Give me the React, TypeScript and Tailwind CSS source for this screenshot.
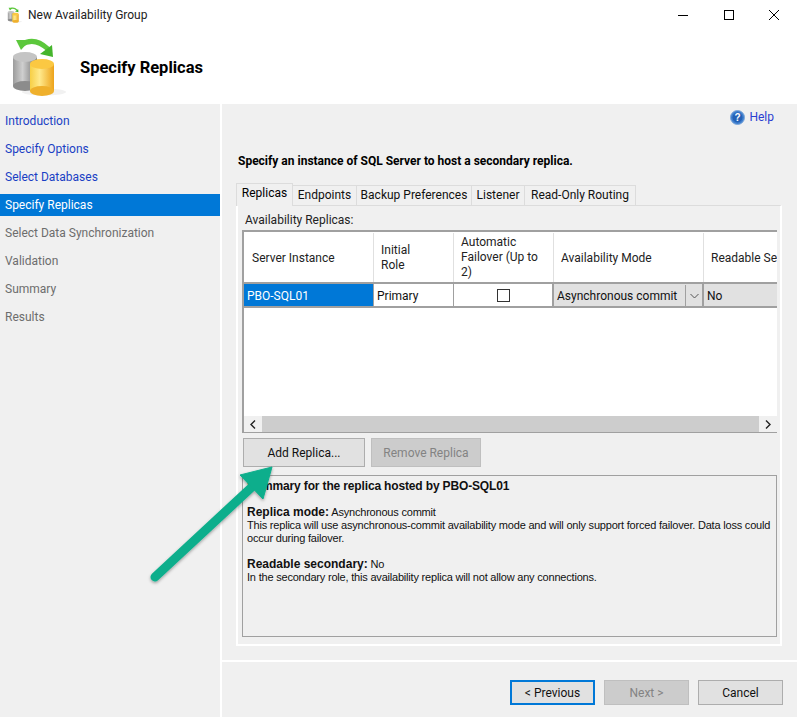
const ui = { fontFamily: 'Roboto, "Noto Sans", sans-serif' };

function DbIcon({ size }: { size: number }) {
  return (
    <svg width={size} height={size} viewBox="0 0 60 60" className="block">
      <defs>
        <linearGradient id="g1" x1="0" x2="1" y1="0" y2="0">
          <stop offset="0" stopColor="#9c9c9c" />
          <stop offset="0.4" stopColor="#cfcfcf" />
          <stop offset="1" stopColor="#6f6f6f" />
        </linearGradient>
        <linearGradient id="g2" x1="0" x2="1" y1="0" y2="0">
          <stop offset="0" stopColor="#f7cf45" />
          <stop offset="0.4" stopColor="#ffe98c" />
          <stop offset="1" stopColor="#eda31a" />
        </linearGradient>
      </defs>
      <ellipse cx="34" cy="55" rx="22" ry="3.5" fill="#f1f1f1" />
      <path d="M11 8 Q24 -1 38 12" fill="none" stroke="#5cc83c" strokeWidth="5" />
      <path d="M6 3 L20 3 L11 13 Z" fill="#5cc83c" />
      <path d="M30 17 L42 8 L43 20 Z" fill="#45b52c" />
      <rect x="3" y="20" width="24" height="29" fill="url(#g1)" />
      <ellipse cx="15" cy="49" rx="12" ry="5" fill="#8c8c8c" />
      <ellipse cx="15" cy="20" rx="12" ry="5" fill="#c4c4c4" />
      <rect x="20" y="27" width="24" height="27" fill="url(#g2)" />
      <ellipse cx="32" cy="54" rx="12" ry="5" fill="#efb02c" />
      <ellipse cx="32" cy="27" rx="12" ry="5" fill="#fbc842" />
    </svg>
  );
}

function HelpIcon() {
  return (
    <svg width="15" height="15" viewBox="0 0 15 15" className="block">
      <circle cx="7.5" cy="7.5" r="7" fill="#3f7fcf" stroke="#7da7d9" />
      <circle cx="7.5" cy="7.5" r="5" fill="#2461b5" />
      <text x="7.5" y="11" textAnchor="middle" fontSize="10" fontWeight="700" fill="#fff" fontFamily="Liberation Sans">?</text>
    </svg>
  );
}

const navItems: [string, boolean, boolean][] = [
  ["Introduction", true, false],
  ["Specify Options", true, false],
  ["Select Databases", true, false],
  ["Specify Replicas", false, true],
  ["Select Data Synchronization", false, false],
  ["Validation", false, false],
  ["Summary", false, false],
  ["Results", false, false],
];

function Tab({ label, w, active }: { label: string; w: string; active?: boolean }) {
  return active ? (
    <div className={`${w} h-[23px] -mb-px z-10 bg-[#f0f0f0] border border-b-0 border-[#dcdcdc] flex items-center justify-center pb-1 text-black`}>{label}</div>
  ) : (
    <div className={`${w} h-[20px] bg-[#f0f0f0] border border-b-0 border-l-0 border-[#dcdcdc] flex items-center justify-center pb-px text-[#111]`}>{label}</div>
  );
}

export default function App() {
  return (
    <div className="relative w-[797px] h-[717px] overflow-hidden bg-white text-[12px] text-[#111]" style={ui}>
      {/* Title bar */}
      <div className="h-[30px] flex items-center pl-[7px]">
        <DbIcon size={16} />
        <span className="ml-[5px] text-[#222]">New Availability Group</span>
        <div className="ml-auto flex items-center">
          <div className="w-[46px] h-[30px] flex items-center justify-center">
            <svg width="10" height="10" viewBox="0 0 10 10"><path d="M0 5.5H10" stroke="#000" strokeWidth="1" /></svg>
          </div>
          <div className="w-[45px] h-[30px] flex items-center justify-center">
            <svg width="10" height="10" viewBox="0 0 10 10"><rect x="0.5" y="0.5" width="9" height="9" fill="none" stroke="#000" /></svg>
          </div>
          <div className="w-[46px] h-[30px] flex items-center justify-center">
            <svg width="10" height="10" viewBox="0 0 10 10"><path d="M0 0L10 10M10 0L0 10" stroke="#000" /></svg>
          </div>
        </div>
      </div>

      {/* Header */}
      <div className="h-[74px] flex items-center pl-[10px]">
        <DbIcon size={60} />
        <span className="ml-[10px] mt-[2px] text-[16.5px] font-bold text-black">Specify Replicas</span>
      </div>

      <div className="flex h-[613px]">
        {/* Sidebar */}
        <div className="w-[220px] bg-[#f0f0f0] pt-[6px] flex flex-col gap-[6px]">
          {navItems.map(([label, link, active]) => (
            <div
              key={label}
              className={`h-[22px] pl-[5px] flex items-center ${active ? "bg-[#0078d7] text-white" : link ? "text-[#1a3fc4]" : "text-[#6d6d6d]"}`}
            >
              {label}
            </div>
          ))}
        </div>

        {/* Main */}
        <div className="ml-[2px] flex-1 bg-[#f0f0f0] flex flex-col">
          <div className="h-[26px] flex items-center justify-end pr-[23px] gap-[4px]">
            <HelpIcon />
            <span className="text-[#2a3fd0]">Help</span>
          </div>
          <div className="mt-[21px] ml-[16px] h-[20px] flex items-center font-bold text-black text-[12px]">
            Specify an instance of SQL Server to host a secondary replica.
          </div>

          {/* Tabs */}
          <div className="ml-[14px] mt-[11px] w-[546px]">
            <div className="flex items-end h-[23px]">
              <Tab label="Replicas" w="w-[57px]" active />
              <Tab label="Endpoints" w="w-[64px]" />
              <Tab label="Backup Preferences" w="w-[115px]" />
              <Tab label="Listener" w="w-[53px]" />
              <Tab label="Read-Only Routing" w="w-[111px]" />
            </div>
            <div className="h-[441px] border-2 border-t border-white border-t-[#dcdcdc] px-[4px] flex flex-col">
              <div className="h-[24px] pl-[3px] pt-[3px] flex items-center text-[#222]">Availability Replicas:</div>

              {/* Grid */}
              <div className="w-[535px] h-[203px] border-2 border-[#a0a0a0] border-b border-b-[#a0a0a0] border-r-0 bg-white flex flex-col">
                <div className="h-[52px] pt-px flex border-b-2 border-[#a0a0a0] text-[#222] overflow-hidden">
                  <div className="w-[130px] shrink-0 border-r border-[#e0e0e0] pl-[8px] flex items-center">Server Instance</div>
                  <div className="w-[80px] shrink-0 border-r border-[#e0e0e0] pl-[7px] flex items-center leading-[15px]">Initial<br />Role</div>
                  <div className="w-[100px] shrink-0 border-r border-[#e0e0e0] pl-[7px] flex items-center leading-[15px]">Automatic<br />Failover (Up to<br />2)</div>
                  <div className="w-[150px] shrink-0 border-r border-[#e0e0e0] pl-[7px] flex items-center">Availability Mode</div>
                  <div className="flex-1 pl-[7px] flex items-center whitespace-nowrap overflow-hidden">Readable Secondary</div>
                </div>
                <div className="h-[24px] flex border-b-2 border-[#a0a0a0]">
                  <div className="w-[130px] shrink-0 bg-[#0078d7] text-white pl-[3px] pt-px flex items-center border-r border-[#a0a0a0]">PBO-SQL01</div>
                  <div className="w-[80px] shrink-0 border-r border-[#a0a0a0] pl-[3px] pt-px flex items-center">Primary</div>
                  <div className="w-[100px] shrink-0 border-r-2 border-[#a0a0a0] flex items-center justify-center">
                    <div className="w-[13px] h-[13px] border border-[#333] bg-white" />
                  </div>
                  <div className="w-[150px] shrink-0 border-r-2 border-[#a0a0a0] bg-[#e1e1e1] flex items-center pl-[3px] pt-px">
                    <span className="flex-1">Asynchronous commit</span>
                    <div className="w-[17px] h-full border-l border-[#a0a0a0] flex items-center justify-center">
                      <svg width="9" height="6" viewBox="0 0 9 6"><path d="M0.5 1L4.5 5L8.5 1" fill="none" stroke="#555" /></svg>
                    </div>
                  </div>
                  <div className="flex-1 bg-[#e1e1e1] pl-[3px] pt-px flex items-center">No</div>
                </div>
                <div className="flex-1" />
                <div className="h-[16px] bg-[#f0f0f0] flex items-center">
                  <div className="w-[18px] h-full flex items-center justify-center">
                    <svg width="6" height="9" viewBox="0 0 6 9"><path d="M5 0.5L1 4.5L5 8.5" fill="none" stroke="#222" strokeWidth="1.4" /></svg>
                  </div>
                  <div className="w-[497px] h-full bg-[#cdcdcd]" />
                  <div className="w-[18px] h-full flex items-center justify-center">
                    <svg width="6" height="9" viewBox="0 0 6 9"><path d="M1 0.5L5 4.5L1 8.5" fill="none" stroke="#222" strokeWidth="1.4" /></svg>
                  </div>
                </div>
              </div>

              {/* Buttons */}
              <div className="mt-[5px] flex gap-[6px] pl-px">
                <div className="w-[122px] h-[29px] bg-[#e1e1e1] border border-[#adadad] flex items-center justify-center text-[#111]">Add Replica...</div>
                <div className="w-[110px] h-[29px] bg-[#cccccc] border border-[#bfbfbf] flex items-center justify-center text-[#838383]">Remove Replica</div>
              </div>

              {/* Summary */}
              <div className="mt-[8px] w-[535px] h-[162px] border border-[#a0a0a0] pl-[4px] pt-[4px] text-[11px] leading-[13px] tracking-[-0.2px] text-[#111]" style={{ fontFamily: '"Liberation Sans", Arial, sans-serif' }}>
                <div className="h-[15px] font-bold text-[12px] tracking-[-0.15px] whitespace-nowrap">Summary for the replica hosted by PBO-SQL01</div>
                <div className="mt-[11px]"><b className="text-[12px] tracking-normal font-bold">Replica mode:</b> Asynchronous commit</div>
                <div className="whitespace-nowrap">This replica will use asynchronous-commit availability mode and will only support forced failover. Data loss could</div>
                <div>occur during failover.</div>
                <div className="mt-[13px]"><b className="text-[12px] tracking-normal font-bold">Readable secondary:</b> No</div>
                <div>In the secondary role, this availability replica will not allow any connections.</div>
              </div>
            </div>
          </div>

          {/* Footer */}
          <div className="mt-[14px] border-t-2 border-white h-[56px] flex justify-end items-start pt-[18px] pr-[14px] gap-[9px]">
            <div className="w-[85px] h-[25px] bg-[#e1e1e1] border-2 border-[#0078d7] flex items-center justify-center">&lt; Previous</div>
            <div className="w-[85px] h-[25px] bg-[#cccccc] border border-[#bfbfbf] flex items-center justify-center text-[#838383]">Next &gt;</div>
            <div className="w-[85px] h-[25px] bg-[#e1e1e1] border border-[#adadad] flex items-center justify-center">Cancel</div>
          </div>
        </div>
      </div>

      {/* Arrow annotation */}
      <svg className="absolute left-[140px] top-[455px] pointer-events-none" width="150" height="140" viewBox="0 0 150 140">
        <defs>
          <filter id="sh" x="-20%" y="-20%" width="140%" height="140%">
            <feDropShadow dx="0" dy="1.5" stdDeviation="1.5" floodColor="#000" floodOpacity="0.35" />
          </filter>
        </defs>
        <g filter="url(#sh)" fill="#0fae8c">
          <path d="M15 122 L113 31" stroke="#0fae8c" strokeWidth="9" strokeLinecap="round" />
          <path d="M100 20 L132 12 L123 44 Z" stroke="#0fae8c" strokeWidth="1" strokeLinejoin="round" />
        </g>
      </svg>
    </div>
  );
}
